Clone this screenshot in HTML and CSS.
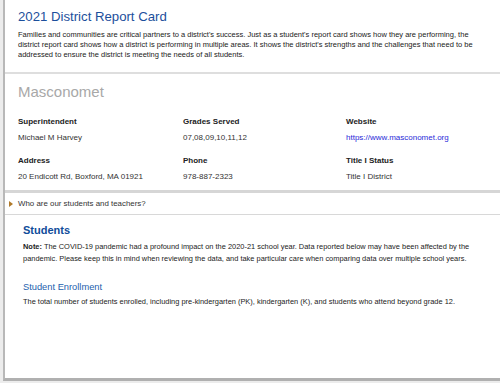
FILE: index.html
```html
<!DOCTYPE html>
<html lang="en">
<head>
  <meta charset="UTF-8" />
  <meta name="viewport" content="width=device-width, initial-scale=1.0"/>
  <title>2021 District Report Card</title>
  <link rel="stylesheet" href="styles.css">
</head>
<body>
  <div class="pagina">

    <!-- Cabecalho -->
    <div class="intro">
      <h1>2021 District Report Card</h1>
      <p>Families and communities are critical partners to a district's success. Just as a student's report card shows how they are performing, the district report card shows how a district is performing in multiple areas. It shows the district's strengths and the challenges that need to be addressed to ensure the district is meeting the needs of all students.</p>
    </div>

    <!-- Dados do distrito -->
    <div class="distrito">
      <h2>Masconomet</h2>
      <div class="grade">
        <div class="campo">
          <div class="rotulo">Superintendent</div>
          <div class="valor">Michael M Harvey</div>
        </div>
        <div class="campo">
          <div class="rotulo">Grades Served</div>
          <div class="valor">07,08,09,10,11,12</div>
        </div>
        <div class="campo">
          <div class="rotulo">Website</div>
          <div class="valor"><a href="#">https://www.masconomet.org</a></div>
        </div>
        <div class="campo">
          <div class="rotulo">Address</div>
          <div class="valor">20 Endicott Rd, Boxford, MA 01921</div>
        </div>
        <div class="campo">
          <div class="rotulo">Phone</div>
          <div class="valor">978-887-2323</div>
        </div>
        <div class="campo">
          <div class="rotulo">Title I Status</div>
          <div class="valor">Title I District</div>
        </div>
      </div>
    </div>

    <div class="resumo"><span class="seta"></span>Who are our students and teachers?</div>

    <!-- Alunos -->
    <div class="conteudo">
      <h3>Students</h3>
      <p><b>Note:</b> The COVID-19 pandemic had a profound impact on the 2020-21 school year. Data reported below may have been affected by the pandemic. Please keep this in mind when reviewing the data, and take particular care when comparing data over multiple school years.</p>

      <h4>Student Enrollment</h4>
      <p>The total number of students enrolled, including pre-kindergarten (PK), kindergarten (K), and students who attend beyond grade 12.</p>
    </div>

  </div>
</body>
</html>
```

FILE: styles.css
```css
* {
  box-sizing: border-box;
}

body, html {
  margin: 0;
  padding: 0;
  height: 100%;
  background: #ececec;
  font-family: "Liberation Sans", Arial, sans-serif;
  color: #222;
}

.pagina {
  margin-left: 3px;
  height: 381px;
  background: #fff;
  border-left: 2px solid #b8b8b8;
  border-bottom: 3px solid #b0b0b0;
  display: flex;
  flex-direction: column;
}

.intro {
  padding: 9px 14px 12px 13px;
  border-bottom: 2px solid #dedede;
}

h1 {
  margin: 0 0 5px;
  font-size: 13.2px;
  line-height: 16px;
  font-weight: normal;
  color: #1c4f9c;
}

p {
  margin: 0;
  font-size: 7.5px;
  line-height: 10px;
  color: #222;
}

.distrito {
  padding: 9px 14px 8px 13px;
  border-bottom: 3px solid #d6d6d6;
}

h2 {
  margin: 0 0 16px;
  font-size: 15px;
  line-height: 18px;
  font-weight: normal;
  color: #a8a8a8;
}

.grade {
  display: grid;
  grid-template-columns: 165px 163px 1fr;
  row-gap: 13px;
}

.rotulo {
  font-size: 8px;
  line-height: 10px;
  font-weight: bold;
  color: #222;
  margin-bottom: 6px;
}

.valor {
  font-size: 8px;
  line-height: 10px;
  color: #333;
}

.valor a {
  color: #2a2ad8;
  text-decoration: none;
}

.resumo {
  height: 22px;
  display: flex;
  align-items: center;
  padding-left: 4px;
  font-size: 7.9px;
  color: #333;
  border-bottom: 1px solid #d8d8d8;
}

.seta {
  width: 0;
  height: 0;
  border-top: 3px solid transparent;
  border-bottom: 3px solid transparent;
  border-left: 4px solid #b07a2a;
  margin-right: 5px;
}

.conteudo {
  padding: 9px 14px 0 18px;
}

.conteudo p {
  font-size: 7.43px;
  line-height: 12px;
}

h3 {
  margin: 0 0 4px;
  font-size: 11px;
  line-height: 13px;
  color: #0f4c9a;
}

h4 {
  margin: 16px 0 3px;
  font-size: 9.3px;
  line-height: 12px;
  font-weight: normal;
  color: #2461ad;
}
```
